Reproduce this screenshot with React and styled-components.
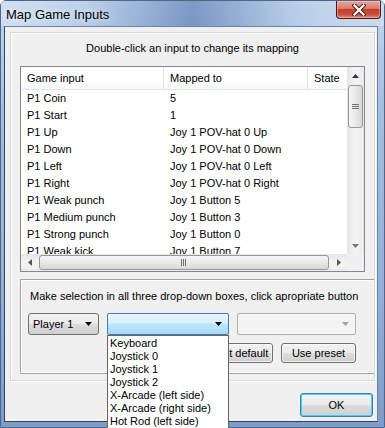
import React from 'react';
import styled, { createGlobalStyle, css } from 'styled-components';

const GlobalStyle = createGlobalStyle`
  html, body {
    margin: 0;
    padding: 0;
    overflow: hidden;
  }
  body {
    font-family: "Liberation Sans", Arial, sans-serif;
    font-size: 11px;
    color: #000;
  }
`;

const Window = styled.div`
  width: 385px;
  height: 428px;
  box-sizing: border-box;
  display: flex;
  flex-direction: column;
  border: 1px solid #4f6687;
  border-radius: 6px 6px 0 0;
  background: linear-gradient(180deg, #c3d6ec 0%, #a6bfdf 25%, #93afd5 70%, #7e9cc8 100%);
`;

const TitleBar = styled.div`
  height: 25px;
  flex: none;
  display: flex;
  align-items: flex-start;
  justify-content: space-between;
  background: linear-gradient(90deg, rgba(214,228,244,0.75) 0%, rgba(170,195,228,0.25) 22%, rgba(78,114,172,0.6) 50%, rgba(170,195,228,0.25) 78%, rgba(214,228,244,0.6) 100%);
`;

const TitleText = styled.div`
  padding: 6px 0 0 5px;
  font-size: 13px;
  line-height: 15px;
  color: #000;
  text-shadow: 0 0 6px rgba(255,255,255,0.9);
`;

const CloseButton = styled.div`
  width: 45px;
  height: 18px;
  margin-right: 3px;
  box-sizing: border-box;
  border: 1px solid #4a1a14;
  border-top: none;
  border-radius: 0 0 4px 4px;
  background: linear-gradient(180deg, #e9a99c 0%, #d77a6a 45%, #c2402c 50%, #c8503d 80%, #de8f7b 100%);
  box-shadow: inset 0 0 0 1px rgba(255,210,200,0.45);
  display: flex;
  align-items: center;
  justify-content: center;
`;

const Client = styled.div`
  flex: 1;
  margin: 0 6px 5px 3px;
  background: #f0f0f0;
  border: 1px solid #6a83a8;
  border-left-color: #2c4468;
  border-bottom-color: #2c4468;
  display: flex;
  flex-direction: column;
`;

const Panel = styled.div`
  margin: 5px 2px 0 5px;
  height: 349px;
  box-sizing: border-box;
  border: 1px solid #d9d9d9;
  box-shadow: inset 1px 1px 0 #fff, 1px 1px 0 #fff;
  padding: 0 0 7px 9px;
  display: flex;
  flex-direction: column;
`;

const Heading = styled.div`
  padding-top: 8px;
  line-height: 14px;
  height: 33px;
  box-sizing: border-box;
  text-align: center;
  padding-right: 9px;
`;

const ListView = styled.div`
  height: 206px;
  margin-right: 9px;
  box-sizing: border-box;
  border: 1px solid #828790;
  background: #fff;
  display: grid;
  grid-template-columns: 1fr 17px;
  grid-template-rows: 1fr 17px;
`;

const ListContent = styled.div`
  overflow: hidden;
  white-space: nowrap;
`;

const columns = css`
  display: grid;
  grid-template-columns: 143px 144px 100px;
`;

const HeaderRow = styled.div`
  ${columns};
  height: 23px;
  box-sizing: border-box;
  border-bottom: 1px solid #e3e3e3;
  background: linear-gradient(180deg, #fff 0%, #fff 60%, #f7f8f9 100%);
`;

const HeaderCell = styled.div`
  padding-left: 6px;
  line-height: 22px;
  border-right: 1px solid #e3e3e3;
`;

const Row = styled.div`
  ${columns};
  height: 17px;
  line-height: 17px;
`;

const Cell = styled.div`
  padding-left: 6px;
  overflow: hidden;
`;

const ScrollBar = styled.div`
  display: flex;
  flex-direction: ${({ $vertical }) => ($vertical ? 'column' : 'row')};
  background: ${({ $vertical }) =>
    $vertical
      ? 'linear-gradient(90deg, #e6e6e6 0%, #f2f2f2 40%, #f2f2f2 70%, #e9e9e9 100%)'
      : 'linear-gradient(180deg, #e6e6e6 0%, #f2f2f2 40%, #f2f2f2 70%, #e9e9e9 100%)'};
`;

const ScrollArrow = styled.div`
  flex: none;
  width: 17px;
  height: 17px;
  display: flex;
  align-items: center;
  justify-content: center;
`;

const Thumb = styled.div`
  flex: none;
  box-sizing: border-box;
  border: 1px solid #979797;
  border-radius: 3px;
  display: flex;
  align-items: center;
  justify-content: center;
  ${({ $vertical }) =>
    $vertical
      ? css`
          width: 15px;
          margin: 1px 1px 0;
          height: 43px;
          background: linear-gradient(90deg, #f5f5f5 0%, #e9e9e9 50%, #d8d8d8 100%);
        `
      : css`
          height: 15px;
          margin: 1px 0 0 1px;
          width: 290px;
          background: linear-gradient(180deg, #f5f5f5 0%, #e9e9e9 50%, #d8d8d8 100%);
        `}
`;

const Spacer = styled.div`
  flex: 1;
`;

const Corner = styled.div`
  background: #f0f0f0;
`;

const Group = styled.div`
  margin-top: 7px;
  height: 94px;
  box-sizing: border-box;
  border: 1px solid #a0a0a0;
  border-right: none;
  border-bottom-color: #fff;
  box-shadow: inset 1px 1px 0 #fff, 0 1px 0 #a0a0a0;
  padding: 10px 18px 0 7px;
  display: flex;
  flex-direction: column;
`;

const GroupText = styled.div`
  line-height: 13px;
  padding-left: 2px;
  white-space: nowrap;
`;

const ComboRow = styled.div`
  margin-top: 10px;
  display: flex;
  gap: 8px;
`;

const ComboWrap = styled.div`
  position: relative;
`;

const comboLooks = {
  normal: css`
    border: 1px solid #707070;
    border-radius: 3px;
    background: linear-gradient(180deg, #f2f2f2 0%, #ebebeb 50%, #dddddd 50%, #cfcfcf 100%);
  `,
  active: css`
    border: 1px solid #3c7fb1;
    border-radius: 2px;
    background: linear-gradient(180deg, #eaf6fd 0%, #d9f0fc 45%, #bee6fd 50%, #a7d9f5 100%);
  `,
  disabled: css`
    border: 1px solid #adb2b5;
    border-radius: 2px;
    background: #f4f4f4;
  `,
};

const Combo = styled.div`
  width: ${({ $width }) => $width}px;
  height: 22px;
  box-sizing: border-box;
  display: flex;
  align-items: center;
  justify-content: space-between;
  padding: 0 6px 0 4px;
  ${({ $look }) => comboLooks[$look]};
`;

const Popup = styled.div`
  position: absolute;
  top: 100%;
  left: 0;
  right: 0;
  z-index: 5;
  background: #fff;
  border: 1px solid #646464;
  border-bottom: none;
  padding-top: 1px;
`;

const PopupItem = styled.div`
  line-height: 13px;
  padding-left: 2px;
  white-space: nowrap;
`;

const ButtonRow = styled.div`
  margin-top: 8px;
  display: flex;
  justify-content: flex-end;
  gap: 8px;
`;

const Button = styled.div`
  width: ${({ $width }) => $width}px;
  height: ${({ $height }) => $height || 20}px;
  box-sizing: border-box;
  border: 1px solid ${({ $default }) => ($default ? '#3c7fb1' : '#707070')};
  border-radius: 3px;
  background: linear-gradient(180deg, #f2f2f2 0%, #ebebeb 50%, #dddddd 50%, #cfcfcf 100%);
  box-shadow: inset 0 0 0 1px ${({ $default }) => ($default ? '#48d0fd' : 'rgba(255,255,255,0.7)')};
  display: flex;
  align-items: center;
  justify-content: center;
  white-space: nowrap;
  overflow: hidden;
`;

const Footer = styled.div`
  flex: 1;
  display: flex;
  justify-content: flex-end;
  align-items: flex-start;
  padding: 12px 4px 0 0;
`;

const rows = [
  ['P1 Coin', '5'],
  ['P1 Start', '1'],
  ['P1 Up', 'Joy 1 POV-hat 0 Up'],
  ['P1 Down', 'Joy 1 POV-hat 0 Down'],
  ['P1 Left', 'Joy 1 POV-hat 0 Left'],
  ['P1 Right', 'Joy 1 POV-hat 0 Right'],
  ['P1 Weak punch', 'Joy 1 Button 5'],
  ['P1 Medium punch', 'Joy 1 Button 3'],
  ['P1 Strong punch', 'Joy 1 Button 0'],
  ['P1 Weak kick', 'Joy 1 Button 7'],
];

const devices = [
  'Keyboard',
  'Joystick 0',
  'Joystick 1',
  'Joystick 2',
  'X-Arcade (left side)',
  'X-Arcade (right side)',
  'Hot Rod (left side)',
];

// small triangle glyph used by scroll bars and combo boxes
const Arrow = ({ dir, color = '#000', size = 7 }) => {
  const h = Math.ceil(size / 2);
  const pts = {
    down: `0,0 ${size},0 ${size / 2},${h}`,
    up: `0,${h} ${size},${h} ${size / 2},0`,
    left: `${h},0 ${h},${size} 0,${size / 2}`,
    right: `0,0 0,${size} ${h},${size / 2}`,
  }[dir];
  const vertical = dir === 'up' || dir === 'down';
  return (
    <svg width={vertical ? size : h} height={vertical ? h : size} viewBox={`0 0 ${vertical ? size : h} ${vertical ? h : size}`}>
      <polygon points={pts} fill={color} />
    </svg>
  );
};

const Grip = ({ vertical }) => (
  <svg width={vertical ? 7 : 6} height={vertical ? 6 : 7}>
    {[0, 2, 4].map((o) =>
      vertical ? (
        <line key={o} x1="0" x2="7" y1={o + 0.5} y2={o + 0.5} stroke="#707070" strokeWidth="1" />
      ) : (
        <line key={o} y1="0" y2="7" x1={o + 0.5} x2={o + 0.5} stroke="#707070" strokeWidth="1" />
      )
    )}
  </svg>
);

const CloseGlyph = () => (
  <svg width="14" height="12" viewBox="0 0 14 12">
    <path d="M2.5 1.5 L11.5 10.5 M11.5 1.5 L2.5 10.5" stroke="#4a1d18" strokeWidth="4.2" strokeLinecap="square" />
    <path d="M2.5 1.5 L11.5 10.5 M11.5 1.5 L2.5 10.5" stroke="#fff" strokeWidth="2.2" strokeLinecap="square" />
  </svg>
);

export default function App() {
  return (
    <>
      <GlobalStyle />
      <Window>
        <TitleBar>
          <TitleText>Map Game Inputs</TitleText>
          <CloseButton>
            <CloseGlyph />
          </CloseButton>
        </TitleBar>
        <Client>
          <Panel>
            <Heading>Double-click an input to change its mapping</Heading>
            <ListView>
              <ListContent>
                <HeaderRow>
                  <HeaderCell>Game input</HeaderCell>
                  <HeaderCell>Mapped to</HeaderCell>
                  <HeaderCell>State</HeaderCell>
                </HeaderRow>
                {rows.map(([input, mapped]) => (
                  <Row key={input}>
                    <Cell>{input}</Cell>
                    <Cell>{mapped}</Cell>
                    <Cell />
                  </Row>
                ))}
              </ListContent>
              <ScrollBar $vertical>
                <ScrollArrow>
                  <Arrow dir="up" color="#333" />
                </ScrollArrow>
                <Thumb $vertical>
                  <Grip vertical />
                </Thumb>
                <Spacer />
                <ScrollArrow>
                  <Arrow dir="down" color="#777" />
                </ScrollArrow>
              </ScrollBar>
              <ScrollBar>
                <ScrollArrow>
                  <Arrow dir="left" color="#555" />
                </ScrollArrow>
                <Thumb>
                  <Grip />
                </Thumb>
                <Spacer />
                <ScrollArrow>
                  <Arrow dir="right" color="#555" />
                </ScrollArrow>
              </ScrollBar>
              <Corner />
            </ListView>
            <Group>
              <GroupText>Make selection in all three drop-down boxes, click apropriate button</GroupText>
              <ComboRow>
                <Combo $look="normal" $width={72}>
                  <span>Player 1</span>
                  <Arrow dir="down" />
                </Combo>
                <ComboWrap>
                  <Combo $look="active" $width={122}>
                    <span />
                    <Arrow dir="down" />
                  </Combo>
                  <Popup>
                    {devices.map((d) => (
                      <PopupItem key={d}>{d}</PopupItem>
                    ))}
                  </Popup>
                </ComboWrap>
                <Combo $look="disabled" $width={121}>
                  <span />
                  <Arrow dir="down" color="#a6a6a6" />
                </Combo>
              </ComboRow>
              <ButtonRow>
                <Button $width={62}>Set default</Button>
                <Button $width={75}>Use preset</Button>
              </ButtonRow>
            </Group>
          </Panel>
          <Footer>
            <Button $width={73} $height={24} $default>
              OK
            </Button>
          </Footer>
        </Client>
      </Window>
    </>
  );
}
